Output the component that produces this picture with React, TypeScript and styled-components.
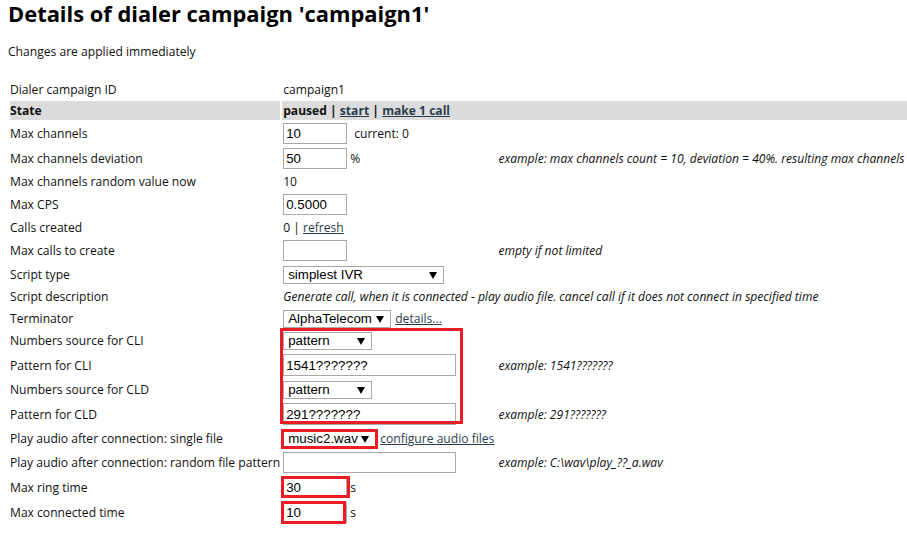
import React from 'react';
import styled, { createGlobalStyle } from 'styled-components';

const Global = createGlobalStyle`
  html, body {
    margin: 0;
    overflow: hidden;
    background: #fff;
  }
  body {
    padding: 0 8px;
    font-family: "Open Sans", "Noto Sans", sans-serif;
    font-size: 12.1px;
    color: #111;
  }
`;

const Heading = styled.h1`
  margin: 0;
  font-size: 21.9px;
  line-height: 28px;
  font-weight: 700;
  color: #000;
`;

const Intro = styled.p`
  margin: 15px 0 0;
  line-height: 18px;
`;

const Frame = styled.div`
  position: relative;
  margin-top: 17px;
`;

const Table = styled.table`
  border-spacing: 2px;
  white-space: nowrap;
`;

const Row = styled.tr<{ $shaded?: boolean }>`
  background: ${({ $shaded }) => ($shaded ? '#dcdcdc' : 'transparent')};
  font-weight: ${({ $shaded }) => ($shaded ? 700 : 400)};
`;

const Label = styled.td`
  width: 271px;
  padding: 1px 0;
  height: 17px;
  line-height: 17px;
  vertical-align: middle;
`;

const Value = styled.td`
  width: 214px;
  padding: 1px 1px;
  height: 17px;
  line-height: 17px;
  vertical-align: middle;
`;

const Note = styled.td`
  padding: 1px 1px;
  font-style: italic;
  line-height: 17px;
  vertical-align: middle;
`;

const Description = styled.span`
  font-style: italic;
`;

const Link = styled.a`
  color: #2b3e50;
  text-decoration: underline;
  cursor: pointer;
`;

const Side = styled.span<{ $gap?: number }>`
  margin-left: ${({ $gap }) => $gap ?? 3}px;
  vertical-align: middle;
`;

const Field = styled.input<{ $w?: number; $h?: number }>`
  box-sizing: border-box;
  width: ${({ $w }) => $w ?? 64}px;
  height: ${({ $h }) => $h ?? 21}px;
  margin: 0;
  padding: 0 2px;
  border: 1px solid #a9a9a9;
  font-family: "Liberation Sans", Arial, sans-serif;
  font-size: 13.33px;
  color: #000;
  vertical-align: middle;
  outline: none;
`;

const SelectBox = styled.span<{ $w: number }>`
  position: relative;
  display: inline-block;
  width: ${({ $w }) => $w}px;
  height: 18px;
  vertical-align: middle;
`;

const Select = styled.select`
  appearance: none;
  box-sizing: border-box;
  display: block;
  width: 100%;
  height: 18px;
  margin: 0;
  padding: 0 12px 0 4px;
  border: 1px solid #a9a9a9;
  border-radius: 0;
  background: #fff;
  font-family: "Liberation Sans", Arial, sans-serif;
  font-size: 13.33px;
  line-height: 16px;
  color: #000;
  outline: none;
`;

const Arrow = styled.span`
  position: absolute;
  right: 7px;
  top: 6px;
  width: 0;
  height: 0;
  border-left: 4px solid transparent;
  border-right: 4px solid transparent;
  border-top: 7px solid #000;
  pointer-events: none;
`;

const Marked = styled.span<{ $t: number; $r: number; $b: number; $l: number }>`
  position: relative;
  display: inline-block;
  vertical-align: middle;
  line-height: 0;
  &::after {
    content: '';
    position: absolute;
    top: ${({ $t }) => -$t}px;
    right: ${({ $r }) => -$r}px;
    bottom: ${({ $b }) => -$b}px;
    left: ${({ $l }) => -$l}px;
    border: 3px solid #ed1c24;
    pointer-events: none;
  }
`;

const GroupMark = styled.div`
  position: absolute;
  left: 272px;
  top: 250px;
  width: 183px;
  height: 96px;
  box-sizing: border-box;
  border: 3px solid #ed1c24;
  pointer-events: none;
`;

function Dropdown({ width, value, options }: { width: number; value: string; options: string[] }) {
  return (
    <SelectBox $w={width}>
      <Select defaultValue={value}>
        {options.map((o) => (
          <option key={o}>{o}</option>
        ))}
      </Select>
      <Arrow />
    </SelectBox>
  );
}

const sources = ['pattern', 'list', 'random'];

export default function App() {
  return (
    <>
      <Global />
      <Heading>Details of dialer campaign 'campaign1'</Heading>
      <Intro>Changes are applied immediately</Intro>
      <Frame>
        <Table>
          <tbody>
            <Row>
              <Label>Dialer campaign ID</Label>
              <Value>campaign1</Value>
              <Note />
            </Row>
            <Row $shaded>
              <Label>State</Label>
              <Value colSpan={2}>
                paused | <Link>start</Link> | <Link>make 1 call</Link>
              </Value>
            </Row>
            <Row>
              <Label>Max channels</Label>
              <Value>
                <Field defaultValue="10" />
                <Side $gap={7}>current: 0</Side>
              </Value>
              <Note />
            </Row>
            <Row>
              <Label>Max channels deviation</Label>
              <Value>
                <Field defaultValue="50" />
                <Side>%</Side>
              </Value>
              <Note>example: max channels count = 10, deviation = 40%. resulting max channels count is random between 6 and 14</Note>
            </Row>
            <Row>
              <Label>Max channels random value now</Label>
              <Value>10</Value>
              <Note />
            </Row>
            <Row>
              <Label>Max CPS</Label>
              <Value>
                <Field defaultValue="0.5000" />
              </Value>
              <Note />
            </Row>
            <Row>
              <Label>Calls created</Label>
              <Value>
                0 | <Link>refresh</Link>
              </Value>
              <Note />
            </Row>
            <Row>
              <Label>Max calls to create</Label>
              <Value>
                <Field defaultValue="" />
              </Value>
              <Note>empty if not limited</Note>
            </Row>
            <Row>
              <Label>Script type</Label>
              <Value>
                <Dropdown width={161} value="simplest IVR" options={['simplest IVR', 'conference', 'callback']} />
              </Value>
              <Note />
            </Row>
            <Row>
              <Label>Script description</Label>
              <Value colSpan={2}>
                <Description>
                  Generate call, when it is connected - play audio file. cancel call if it does not connect in specified time
                </Description>
              </Value>
            </Row>
            <Row>
              <Label>Terminator</Label>
              <Value>
                <Dropdown width={108} value="AlphaTelecom" options={['AlphaTelecom', 'BetaTelecom']} />
                <Side $gap={4}>
                  <Link>details...</Link>
                </Side>
              </Value>
              <Note />
            </Row>
            <Row>
              <Label>Numbers source for CLI</Label>
              <Value>
                <Dropdown width={89} value="pattern" options={sources} />
              </Value>
              <Note />
            </Row>
            <Row>
              <Label>Pattern for CLI</Label>
              <Value>
                <Field $w={173} $h={22} defaultValue="1541???????" />
              </Value>
              <Note>example: 1541???????</Note>
            </Row>
            <Row>
              <Label>Numbers source for CLD</Label>
              <Value>
                <Dropdown width={89} value="pattern" options={sources} />
              </Value>
              <Note />
            </Row>
            <Row>
              <Label>Pattern for CLD</Label>
              <Value>
                <Field $w={173} $h={22} defaultValue="291???????" />
              </Value>
              <Note>example: 291???????</Note>
            </Row>
            <Row>
              <Label>Play audio after connection: single file</Label>
              <Value>
                <Marked $t={1} $r={2} $b={1} $l={2}>
                  <Dropdown width={93} value="music2.wav" options={['music1.wav', 'music2.wav']} />
                </Marked>
                <Side $gap={4}>
                  <Link>configure audio files</Link>
                </Side>
              </Value>
              <Note />
            </Row>
            <Row>
              <Label>Play audio after connection: random file pattern</Label>
              <Value>
                <Field $w={173} defaultValue="" />
              </Value>
              <Note>example: C:\wav\play_??_a.wav</Note>
            </Row>
            <Row>
              <Label>Max ring time</Label>
              <Value>
                <Marked $t={1} $r={3} $b={0} $l={2}>
                  <Field defaultValue="30" />
                </Marked>
                <Side>s</Side>
              </Value>
              <Note />
            </Row>
            <Row>
              <Label>Max connected time</Label>
              <Value>
                <Marked $t={1} $r={-1} $b={1} $l={2}>
                  <Field defaultValue="10" />
                </Marked>
                <Side>s</Side>
              </Value>
              <Note />
            </Row>
          </tbody>
        </Table>
        <GroupMark />
      </Frame>
    </>
  );
}
